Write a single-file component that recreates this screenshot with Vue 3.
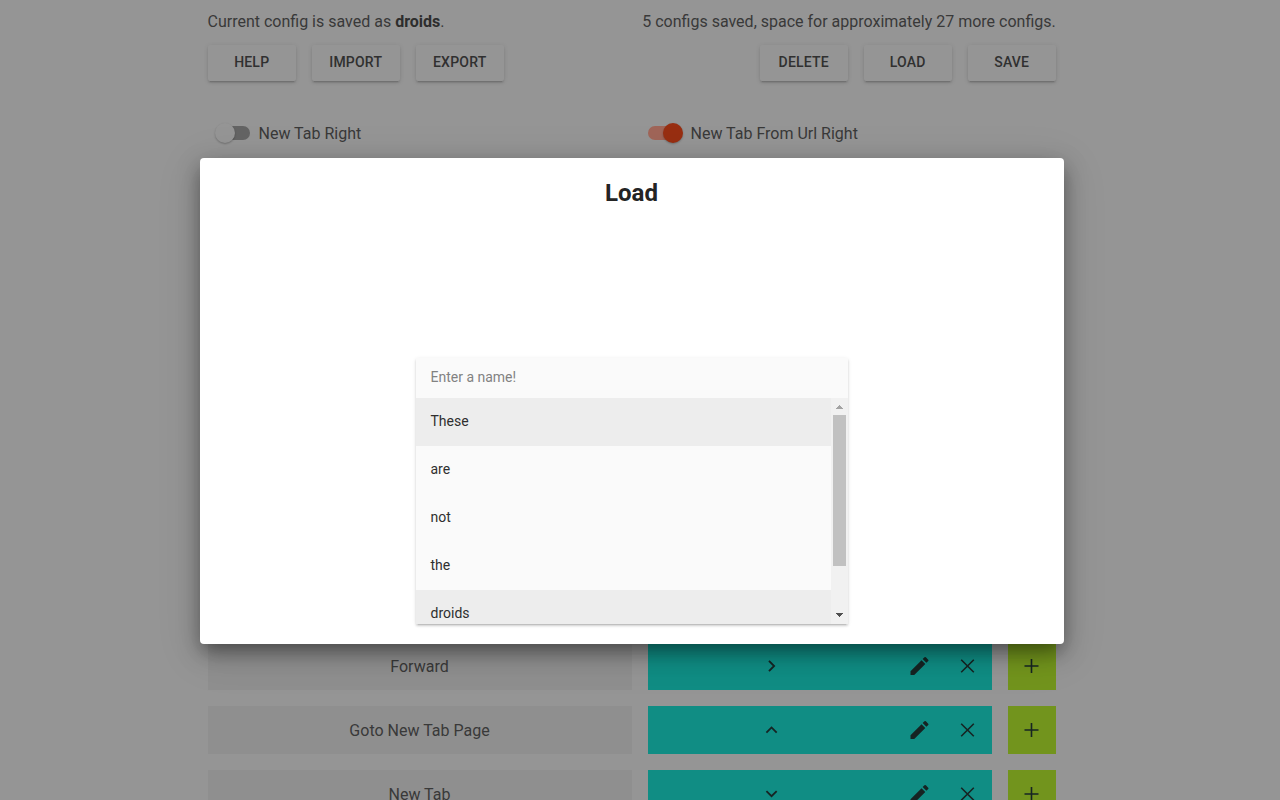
<script setup>
const leftActions = ['HELP', 'IMPORT', 'EXPORT']
const rightActions = ['DELETE', 'LOAD', 'SAVE']
const rows = [
  { name: 'Forward', arrow: 'M9.2 6.4 14.8 12 9.2 17.6' },
  { name: 'Goto New Tab Page', arrow: 'M6.4 14.8 12 9.2 17.6 14.8' },
  { name: 'New Tab', arrow: 'M6.4 8.8 12 14.4 17.6 8.8' },
]
const options = [
  { text: 'These', active: true },
  { text: 'are' },
  { text: 'not' },
  { text: 'the' },
  { text: 'droids', active: true },
]
</script>

<template>
  <div class="page">
    <main class="content">
      <div class="info">
        <span>Current config is saved as <b>droids</b>.</span>
        <span>5 configs saved, space for approximately 27 more configs.</span>
      </div>
      <div class="actions">
        <div class="group"><button v-for="a in leftActions" :key="a">{{ a }}</button></div>
        <div class="group"><button v-for="a in rightActions" :key="a">{{ a }}</button></div>
      </div>
      <div class="toggles">
        <label class="toggle"><span class="switch"><i></i></span><span>New Tab Right</span></label>
        <label class="toggle on"><span class="switch"><i></i></span><span>New Tab From Url Right</span></label>
      </div>
      <div class="rows">
        <div v-for="r in rows" :key="r.name" class="row">
          <div class="name">{{ r.name }}</div>
          <div class="gesture">
            <div class="arrow"><svg width="22" height="22" viewBox="0 0 24 24"><path class="line thick" :d="r.arrow" /></svg></div>
            <div class="cell"><svg width="24" height="24" viewBox="0 0 24 24"><path d="M3 17.25V21h3.75L17.81 9.94l-3.75-3.75L3 17.25zM20.71 7.04a1 1 0 0 0 0-1.41l-2.34-2.34a1 1 0 0 0-1.41 0l-1.83 1.83 3.75 3.75 1.83-1.83z" /></svg></div>
            <div class="cell"><svg width="24" height="24" viewBox="0 0 24 24"><path class="line" d="M5.7 5.7 18.3 18.3M18.3 5.7 5.7 18.3" /></svg></div>
          </div>
          <div class="add"><svg width="24" height="24" viewBox="0 0 24 24"><path class="line" d="M12 5v14M5 12h14" /></svg></div>
        </div>
      </div>
    </main>
    <div class="overlay">
      <section class="dialog">
        <h2>Load</h2>
        <div class="picker">
          <input placeholder="Enter a name!" />
          <div class="list">
            <div class="options">
              <div v-for="o in options" :key="o.text" class="option" :class="{ active: o.active }">{{ o.text }}</div>
            </div>
            <div class="scrollbar">
              <svg class="up" width="17" height="17"><path d="M8 7h1v1h1v1h1v1h1v1H5v-1h1V9h1V8h1z" /></svg>
              <div class="thumb"></div>
              <svg class="down" width="17" height="17"><path d="M5 6h7v1h-1v1h-1v1H9v1H8V9H7V8H6V7H5z" /></svg>
            </div>
          </div>
        </div>
      </section>
    </div>
  </div>
</template>

<style>
body { overflow: hidden; }
</style>
<style scoped>
.page { position: relative; height: 800px; overflow: hidden; background: #959595; color: #393939; font: 400 16px/24px Roboto, sans-serif; }
.content { width: 848px; margin-left: 208px; padding-top: 10px; }
.info, .actions { display: flex; justify-content: space-between; }
.info { height: 35px; }
.info b { font-weight: 700; color: #2d2d2d; }
.info span:last-child { margin-right: .3px; }
.info span:first-child { margin-left: -.5px; }
.group { display: flex; gap: 16px; }
button { width: 88px; height: 36px; padding: 0 .6px 2px 0; border: 0; border-radius: 2px; background: #959595; color: #303030; font: 500 14px/34px Roboto, sans-serif; letter-spacing: .2px; box-shadow: 0 2px 2px rgba(0,0,0,.1), 0 1px 5px rgba(0,0,0,.1), 0 3px 1px -2px rgba(0,0,0,.1); }
.toggles { display: grid; grid-template-columns: 440px 1fr; margin-top: 41px; height: 520px; align-items: start; }
.toggle { display: flex; align-items: center; gap: 8.5px; }
.toggle:first-child { padding-left: 8px; }
.switch { display: flex; align-items: center; width: 34px; height: 14px; margin-bottom: 2px; border-radius: 7px; background: #646464; }
.switch i { flex: none; width: 20px; height: 20px; margin-left: -1px; border-radius: 50%; background: #959595; box-shadow: 0 1px 2px rgba(0,0,0,.25); }
.on .switch { background: #a06558; }
.on .switch i { margin-left: 15px; background: #982e11; }
.rows { display: grid; gap: 16px; }
.row { display: grid; grid-template-columns: 424px 344px 48px; gap: 16px; height: 48px; }
.name { box-sizing: border-box; height: 48px; padding-right: 1px; background: #8f8f8f; text-align: center; line-height: 49px; }
.gesture { display: grid; grid-template-columns: 1fr 48px 48px; background: #108d84; }
.arrow, .cell, .add { display: flex; align-items: center; justify-content: center; padding-right: 1px; }
.add { background: #72941d; }
svg { fill: #162423; }
.line { fill: none; stroke: #162423; stroke-width: 1.6; }
.row path { transform: translateX(-.5px); }
.thick { stroke-width: 2; }
.overlay { position: absolute; inset: 0; }
.dialog { display: flex; flex-direction: column; align-items: center; box-sizing: border-box; width: 864px; height: 486px; margin: 158px 0 0 200px; border-radius: 4px; background: #fff; box-shadow: 0 9px 46px 8px rgba(0,0,0,.06), 0 11px 15px -7px rgba(0,0,0,.15), 0 8px 22px rgba(0,0,0,.38); }
h2 { margin: 19px 0 149px; height: 32px; color: #242424; font: 700 24px/32px Roboto, sans-serif; transform: translateX(-.5px); }
.picker { width: 432px; color: #2f2f2f; font: 400 14px/48px Roboto, sans-serif; box-shadow: 0 2px 2px rgba(0,0,0,.12), 0 1px 4px rgba(0,0,0,.1), 0 3px 1px -2px rgba(0,0,0,.1); }
input { display: block; box-sizing: border-box; width: 100%; height: 40px; padding: 0 14.5px 2px; border: 0; outline: 0; background: #fafafa; color: #212121; font: 400 14px/38px Roboto, sans-serif; }
input::placeholder { color: #828282; opacity: 1; }
.list { position: relative; display: flex; height: 226px; overflow: hidden; background: #fafafa; }
.options { flex: 1; }
.option { height: 48px; padding-left: 14.5px; line-height: 46px; }
.active { background: #ededed; }
.scrollbar { display: flex; flex-direction: column; width: 17px; background: #f1f1f1; }
.scrollbar svg { flex: none; fill: #a3a3a3; }
.scrollbar .down { margin-top: auto; fill: #505050; }
.thumb { width: 13px; height: 151px; margin-left: 2px; background: #c1c1c1; }
</style>
